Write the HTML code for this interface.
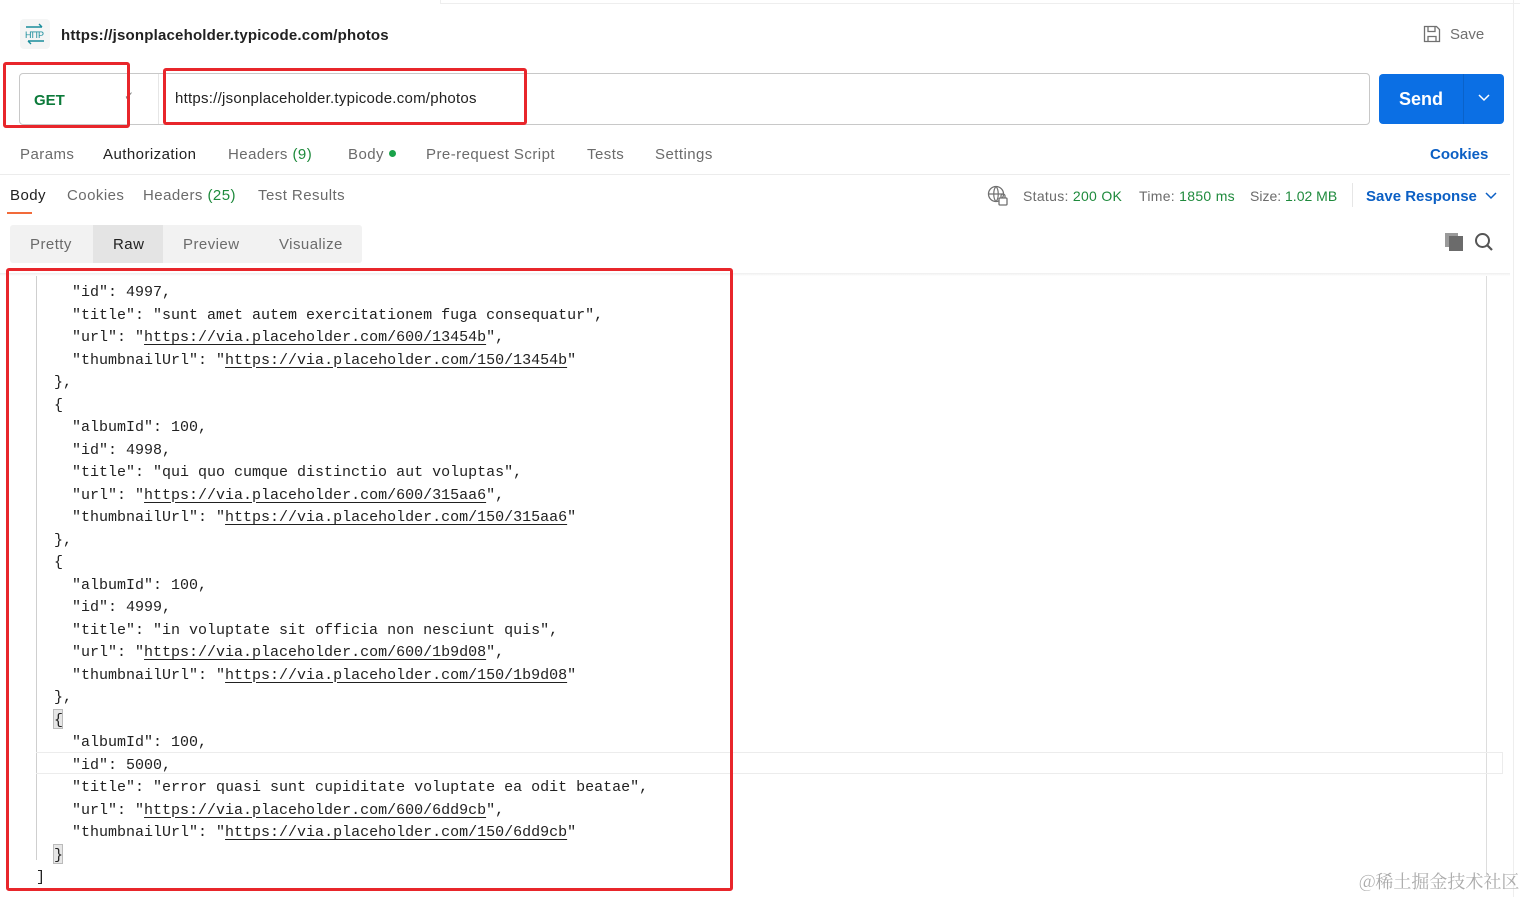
<!DOCTYPE html>
<html><head><meta charset="utf-8"><style>
*{margin:0;padding:0;box-sizing:border-box}
body{width:1526px;height:897px;background:#fff;font-family:"Liberation Sans",sans-serif;position:relative;overflow:hidden;color:#212121}
.a{position:absolute;white-space:nowrap}
.tab{font-size:15px;color:#6b6b6b;letter-spacing:0.45px}
.code{position:absolute;left:0;top:282px;font-family:"Liberation Mono",monospace;font-size:15px;line-height:22.5px;color:#212121;white-space:pre}
.code u{text-decoration:underline;text-underline-offset:3px}
.red{position:absolute;border:3px solid #e8262b;border-radius:3px}
.g{color:#1e8a3c}
</style></head><body>
<div class="a" style="left:440px;top:0;width:1080px;height:4px;border-bottom:1px solid #eee;border-left:1px solid #eee"></div>
<div class="a" style="left:1513px;top:0;width:1px;height:897px;background:#eee"></div>
<div class="a" style="left:20px;top:19px;width:30px;height:30px;background:#f4f5f5;border-radius:4px"></div>
<svg class="a" style="left:22px;top:21px" width="26" height="26" viewBox="0 0 26 26"><path d="M4 6h16M17 3l3 3" stroke="#1a8d9c" stroke-width="1.4" fill="none"/><text x="3" y="17" font-family="Liberation Sans Narrow,Liberation Sans" font-size="9" fill="#1a8d9c" textLength="19">HTTP</text><path d="M22 20H6M9 23l-3-3" stroke="#1a8d9c" stroke-width="1.4" fill="none"/></svg>
<div class="a" style="left:61px;top:27px;font-size:15px;font-weight:bold;color:#212121;letter-spacing:0.2px">https://jsonplaceholder.typicode.com/photos</div>
<svg class="a" style="left:1422px;top:24px" width="20" height="20" viewBox="0 0 20 20"><path d="M2.5 2.5h12l3 3v12h-15z M6 2.5v5h7v-5 M6 17.5v-5h8v5" stroke="#707070" stroke-width="1.3" fill="none"/></svg>
<div class="a" style="left:1450px;top:26px;font-size:15px;color:#707070">Save</div>
<div class="a" style="left:19px;top:73px;width:1351px;height:52px;border:1px solid #c8c8c8;border-radius:4px"></div>
<div class="a" style="left:158px;top:74px;width:1px;height:50px;background:#e6e6e6"></div>
<div class="a" style="left:34px;top:92px;font-size:15px;font-weight:bold;color:#0c7a3a">GET</div>
<div class="a" style="left:124px;top:89px;font-size:12px;color:#888">&#10003;</div>
<div class="a" style="left:175px;top:90px;font-size:15px;color:#212121;letter-spacing:0.25px">https://jsonplaceholder.typicode.com/photos</div>
<div class="a" style="left:1379px;top:74px;width:125px;height:50px;background:#0b6fe4;border-radius:4px"></div>
<div class="a" style="left:1463px;top:74px;width:1px;height:50px;background:#0a62c9"></div>
<div class="a" style="left:1399px;top:89px;font-size:18px;font-weight:bold;color:#fff">Send</div>
<svg class="a" style="left:1477px;top:93px" width="14" height="10"><path d="M2 2l5 5 5-5" stroke="#fff" stroke-width="1.5" fill="none"/></svg>
<div class="red" style="left:3px;top:62px;width:127px;height:66px"></div>
<div class="red" style="left:163px;top:68px;width:364px;height:57px"></div>
<div class="a tab" style="left:20px;top:146px">Params</div>
<div class="a tab" style="left:103px;top:146px;color:#212121">Authorization</div>
<div class="a tab" style="left:228px;top:146px">Headers <span class="g">(9)</span></div>
<div class="a tab" style="left:348px;top:146px">Body <span style="display:inline-block;width:7px;height:7px;border-radius:50%;background:#1aa34a;vertical-align:2px"></span></div>
<div class="a tab" style="left:426px;top:146px">Pre-request Script</div>
<div class="a tab" style="left:587px;top:146px">Tests</div>
<div class="a tab" style="left:655px;top:146px">Settings</div>
<div class="a" style="left:1430px;top:146px;font-size:15px;font-weight:bold;color:#0b5fc4">Cookies</div>
<div class="a" style="left:0;top:174px;width:1510px;height:1px;background:#ececec"></div>
<div class="a tab" style="left:10px;top:187px;color:#212121">Body</div>
<div class="a" style="left:7px;top:212px;width:25px;height:2px;background:#f26b3a"></div>
<div class="a tab" style="left:67px;top:187px">Cookies</div>
<div class="a tab" style="left:143px;top:187px">Headers <span class="g">(25)</span></div>
<div class="a tab" style="left:258px;top:187px">Test Results</div>
<svg class="a" style="left:987px;top:185px" width="22" height="22" viewBox="0 0 22 22"><circle cx="9" cy="9" r="7.5" stroke="#707070" stroke-width="1.3" fill="none"/><path d="M1.5 9h15M9 1.5c-3 3-3 12 0 15M9 1.5c3 3 3 12 0 15" stroke="#707070" stroke-width="1.2" fill="none"/><rect x="12" y="13" width="8" height="7" rx="1" fill="#fff" stroke="#707070" stroke-width="1.3"/><path d="M14 13v-2a2 2 0 0 1 4 0v2" stroke="#707070" stroke-width="1.3" fill="none"/></svg>
<div class="a" style="left:1023px;top:188px;font-size:14px;color:#6b6b6b;letter-spacing:0.3px">Status: <span class="g">200 OK</span></div>
<div class="a" style="left:1139px;top:188px;font-size:14px;color:#6b6b6b;letter-spacing:0.3px">Time: <span class="g">1850 ms</span></div>
<div class="a" style="left:1250px;top:188px;font-size:14px;color:#6b6b6b">Size: <span class="g">1.02 MB</span></div>
<div class="a" style="left:1352px;top:183px;width:1px;height:24px;background:#e6e6e6"></div>
<div class="a" style="left:1366px;top:188px;font-size:15px;font-weight:bold;color:#0b5fc4">Save Response</div>
<svg class="a" style="left:1484px;top:191px" width="14" height="10"><path d="M2 2l5 5 5-5" stroke="#0b5fc4" stroke-width="1.5" fill="none"/></svg>
<div class="a" style="left:10px;top:225px;width:352px;height:38px;background:#f2f2f2;border-radius:3px"></div>
<div class="a" style="left:93px;top:225px;width:70px;height:38px;background:#e4e4e4"></div>
<div class="a tab" style="left:30px;top:236px">Pretty</div>
<div class="a tab" style="left:113px;top:236px;color:#212121">Raw</div>
<div class="a tab" style="left:183px;top:236px">Preview</div>
<div class="a tab" style="left:279px;top:236px">Visualize</div>
<svg class="a" style="left:1444px;top:232px" width="20" height="20"><rect x="1" y="1" width="13" height="14" fill="#9a9a9a"/><rect x="5" y="4" width="14" height="15" fill="#6b6b6b"/></svg>
<svg class="a" style="left:1474px;top:232px" width="20" height="20"><circle cx="8.5" cy="8.5" r="6.5" stroke="#555" stroke-width="2" fill="none"/><path d="M13 13l5 5" stroke="#555" stroke-width="2.2"/></svg>
<div class="a" style="left:0;top:273px;width:1510px;height:3px;background:linear-gradient(#eee,#fff)"></div>
<div class="a" style="left:36px;top:276px;width:1px;height:584px;background:#cfcfcf"></div>
<div class="a" style="left:1486px;top:276px;width:1px;height:600px;background:#ddd"></div>
<div class="a" style="left:36px;top:752px;width:1467px;height:22px;border:1.5px solid #ececec;border-left:none"></div>
<div class="a" style="left:53px;top:709px;width:10px;height:20px;background:#e6e6e6;border:1px solid #bbb"></div>
<div class="a" style="left:53px;top:844px;width:10px;height:20px;background:#e6e6e6;border:1px solid #bbb"></div>
<div class="code">        "id": 4997,
        "title": "sunt amet autem exercitationem fuga consequatur",
        "url": "<u>https://via.placeholder.com/600/13454b</u>",
        "thumbnailUrl": "<u>https://via.placeholder.com/150/13454b</u>"
      },
      {
        "albumId": 100,
        "id": 4998,
        "title": "qui quo cumque distinctio aut voluptas",
        "url": "<u>https://via.placeholder.com/600/315aa6</u>",
        "thumbnailUrl": "<u>https://via.placeholder.com/150/315aa6</u>"
      },
      {
        "albumId": 100,
        "id": 4999,
        "title": "in voluptate sit officia non nesciunt quis",
        "url": "<u>https://via.placeholder.com/600/1b9d08</u>",
        "thumbnailUrl": "<u>https://via.placeholder.com/150/1b9d08</u>"
      },
      {
        "albumId": 100,
        "id": 5000,
        "title": "error quasi sunt cupiditate voluptate ea odit beatae",
        "url": "<u>https://via.placeholder.com/600/6dd9cb</u>",
        "thumbnailUrl": "<u>https://via.placeholder.com/150/6dd9cb</u>"
      }
    ]</div>
<div class="red" style="left:6px;top:268px;width:727px;height:623px"></div>
<div class="a" style="left:1359px;top:868px;font-size:18px;color:#aaa;font-family:'Noto Serif CJK SC','Noto Sans CJK SC',serif">@稀土掘金技术社区</div>
</body></html>
